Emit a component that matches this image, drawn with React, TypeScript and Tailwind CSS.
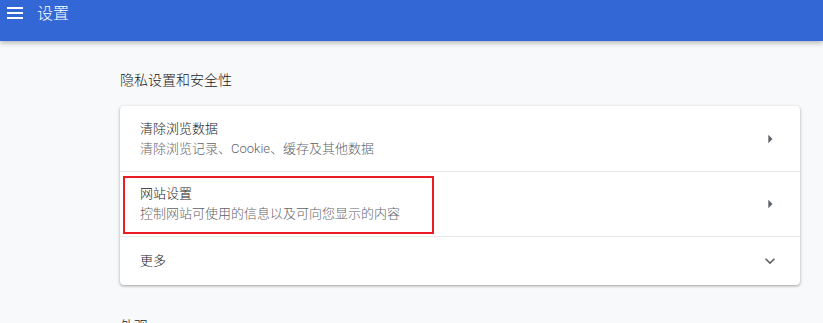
import React from "react";

const FONT = {
  fontFamily: 'Roboto, "Noto Sans CJK SC", "Noto Sans", sans-serif',
};

function ArrowRight() {
  return (
    <svg className="h-5 w-5 text-[#5f6368]" viewBox="0 0 24 24" fill="currentColor">
      <path d="M10 17l5-5-5-5v10z" />
    </svg>
  );
}

function ExpandMore() {
  return (
    <svg className="h-5 w-5 text-[#5f6368]" viewBox="0 0 24 24" fill="currentColor">
      <path d="M16.59 8.59L12 13.17 7.41 8.59 6 10l6 6 6-6z" />
    </svg>
  );
}

interface RowProps {
  title: string;
  subtitle?: string;
  icon: React.ReactNode;
  className?: string;
}

function Row({ title, subtitle, icon, className }: RowProps) {
  return (
    <div className={`flex items-center justify-between px-5 ${className ?? ""}`}>
      <div className="flex flex-col">
        <span className="text-[13px] leading-5 font-light text-[#202124]">{title}</span>
        {subtitle && (
          <span className="text-[13px] leading-5 font-light text-[#5f6368]">{subtitle}</span>
        )}
      </div>
      {icon}
    </div>
  );
}

export default function App() {
  return (
    <div className="h-[323px] w-full overflow-hidden bg-[#f8f9fa]" style={FONT}>
      {/* Header */}
      <div className="relative z-10 flex h-[41px] items-start gap-[14px] bg-[#3367d6] pl-[7px] pt-[2px] shadow-[0_2px_5px_rgba(0,0,0,0.28)]">
        <svg className="mt-[5px] h-[12px] w-4" viewBox="0 0 16 12" fill="white">
          <rect x="0" y="0" width="16" height="2" />
          <rect x="0" y="5" width="16" height="2" />
          <rect x="0" y="10" width="16" height="2" />
        </svg>
        <span className="text-[16px] leading-6 font-light text-white">设置</span>
      </div>

      {/* Content */}
      <div className="ml-[120px] w-[680px]">
        <h2 className="mt-[29px] text-[14px] leading-5 font-light text-[#202124]">
          隐私设置和安全性
        </h2>

        <div className="relative mt-4 rounded bg-white shadow-[0_1px_2px_rgba(60,64,67,0.3),0_1px_3px_1px_rgba(60,64,67,0.15)]">
          <Row
            className="h-[65px]"
            title="清除浏览数据"
            subtitle="清除浏览记录、Cookie、缓存及其他数据"
            icon={<ArrowRight />}
          />
          <Row
            className="h-[65px] border-t border-[#e8eaed]"
            title="网站设置"
            subtitle="控制网站可使用的信息以及可向您显示的内容"
            icon={<ArrowRight />}
          />
          <Row
            className="h-[49px] border-t border-[#e8eaed]"
            title="更多"
            icon={<ExpandMore />}
          />

          {/* Annotation box */}
          <div className="pointer-events-none absolute left-[3px] top-[70px] h-[58px] w-[311px] border-2 border-[#ed1c24]" />
        </div>

        <h2 className="mt-[31px] text-[14px] leading-5 font-light text-[#202124]">外观</h2>
      </div>
    </div>
  );
}
